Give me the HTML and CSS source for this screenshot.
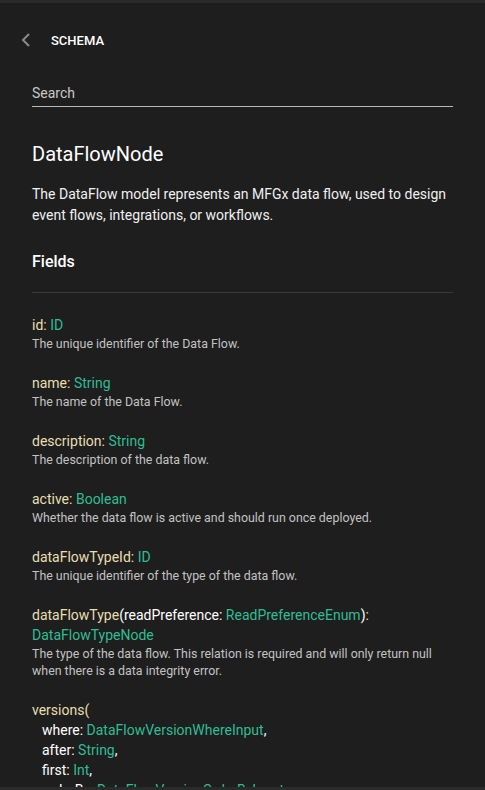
FILE: index.html
```html
<!DOCTYPE html>
<html>
<head>
<meta charset="utf-8">
<link rel="stylesheet" href="styles.css">
</head>
<body>
<div class="panel">
  <div class="header">
    <svg class="back" width="10" height="14" viewBox="0 0 10 14"><path d="M8 1 L2 7 L8 13" fill="none" stroke="#8a8a8a" stroke-width="2"/></svg>
    <span class="header-title">SCHEMA</span>
  </div>
  <div class="content">
    <div class="search">Search</div>
    <h1 class="title">DataFlowNode</h1>
    <p class="desc">The DataFlow model represents an MFGx data flow, used to design event flows, integrations, or workflows.</p>
    <h2 class="section">Fields</h2>
    <div class="divider"></div>

    <div class="field">
      <div class="sig"><span class="fname">id</span><span class="fname">: </span><span class="type">ID</span></div>
      <div class="fdesc">The unique identifier of the Data Flow.</div>
    </div>
    <div class="field">
      <div class="sig"><span class="fname">name: </span><span class="type">String</span></div>
      <div class="fdesc">The name of the Data Flow.</div>
    </div>
    <div class="field">
      <div class="sig"><span class="fname">description: </span><span class="type">String</span></div>
      <div class="fdesc">The description of the data flow.</div>
    </div>
    <div class="field">
      <div class="sig"><span class="fname">active: </span><span class="type">Boolean</span></div>
      <div class="fdesc">Whether the data flow is active and should run once deployed.</div>
    </div>
    <div class="field">
      <div class="sig"><span class="fname">dataFlowTypeId: </span><span class="type">ID</span></div>
      <div class="fdesc">The unique identifier of the type of the data flow.</div>
    </div>
    <div class="field">
      <div class="sig"><span class="fname">dataFlowType</span><span class="arg">(readPreference: </span><span class="type">ReadPreferenceEnum</span><span class="arg">)</span><span class="fname">:</span><br><span class="type">DataFlowTypeNode</span></div>
      <div class="fdesc">The type of the data flow. This relation is required and will only return null when there is a data integrity error.</div>
    </div>
    <div class="field">
      <div class="sig"><span class="fname">versions(</span></div>
      <div class="argline"><span class="arg">where: </span><span class="type">DataFlowVersionWhereInput</span><span class="arg">,</span></div>
      <div class="argline"><span class="arg">after: </span><span class="type">String</span><span class="arg">,</span></div>
      <div class="argline"><span class="arg">first: </span><span class="type">Int</span><span class="arg">,</span></div>
      <div class="argline"><span class="arg">orderBy: </span><span class="type">DataFlowVersionOrderByInput</span></div>
      <div class="sig"><span class="fname">): </span><span class="type">DataFlowVersionNodeConnection</span></div>
    </div>
  </div>
</div>
</body>
</html>
```
FILE: styles.css
```css
html, body {
  margin: 0;
  padding: 0;
  background: #2a2a2a;
}
body {
  font-family: Roboto, "Liberation Sans", sans-serif;
  color: #ffffff;
}
.panel {
  box-sizing: border-box;
  height: 784px;
  margin-top: 3px;
  background: #1e1e1e;
  overflow: hidden;
}
.header {
  display: flex;
  align-items: center;
  height: 24px;
  padding: 25px 0 0 21px;
}
.back {
  display: block;
}
.header-title {
  margin-left: 20px;
  font-size: 13px;
  font-weight: 500;
  color: #ffffff;
}
.content {
  padding: 0 32px;
}
.search {
  margin-top: 31px;
  font-size: 14px;
  line-height: 20px;
  color: #c8c8c8;
  padding-bottom: 3px;
  border-bottom: 1px solid #b8b8b8;
}
.title {
  margin: 33px 0 0 0;
  font-size: 20px;
  font-weight: 400;
  line-height: 28px;
  color: #ffffff;
}
.desc {
  margin: 16px 0 0 0;
  font-size: 14px;
  line-height: 21px;
  color: #f0f0f0;
}
.section {
  margin: 25px 0 0 0;
  font-size: 16px;
  font-weight: 500;
  line-height: 22px;
  color: #ffffff;
}
.divider {
  margin-top: 19px;
  height: 1px;
  background: #3a3a3a;
}
.divider + .field {
  margin-top: 22px;
}
.field {
  margin-bottom: 21px;
}
.sig, .argline {
  font-size: 14px;
  line-height: 20px;
}
.argline {
  padding-left: 10px;
}
.fname {
  color: #e8dfb0;
}
.arg {
  color: #ffffff;
}
.type {
  color: #2ebd94;
}
.fdesc {
  font-size: 12.4px;
  line-height: 17px;
  color: #c2c2c2;
}
```
